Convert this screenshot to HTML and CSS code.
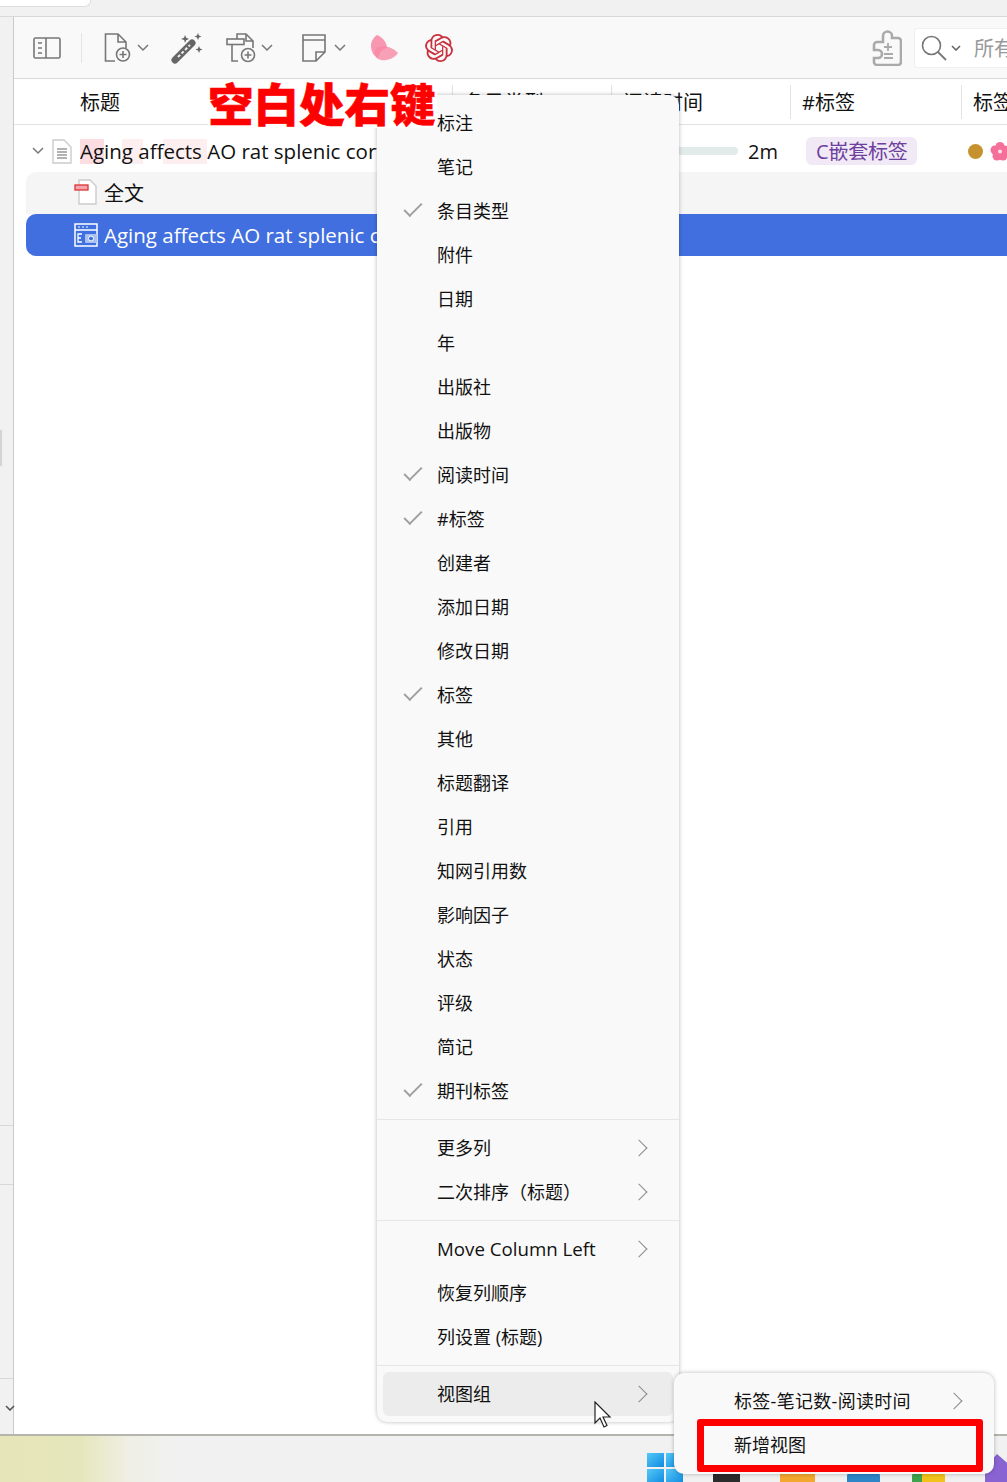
FILE: index.html
```html
<!DOCTYPE html>
<html>
<head>
	<title>Zotero column menu</title>
	<link rel="stylesheet" href="styles.css">
</head>
<body>
	<div class="topstrip"><div class="tab"></div></div>

	<div class="app">
		<div class="sidebar">
			<div class="handle"></div>
			<div class="side-line line-a"></div>
			<div class="side-line line-b"></div>
			<div class="side-line line-c"></div>
			<svg class="side-chev" width="10" height="6" viewBox="0 0 10 6"><path d="M1 1l4 4 4-4" fill="none" stroke="#555" stroke-width="1.6"/></svg>
		</div>

		<div class="main">
			<div class="toolbar">
				<svg class="tool tool-pane" width="28" height="22" viewBox="0 0 28 22"><rect x="1" y="1" width="26" height="20" rx="1.5" fill="none" stroke="#777" stroke-width="1.6"/><path d="M13 1v20M5 6h4M5 11h4M5 16h4" fill="none" stroke="#777" stroke-width="1.6"/></svg>
				<div class="tool-sep"></div>
				<svg class="tool tool-new" width="28" height="30" viewBox="0 0 28 30"><path d="M11 28H1.500V1H14l8 8v6M14 1v8h8" fill="none" stroke="#777" stroke-width="1.6"/><circle cx="19" cy="21.500" r="6.500" fill="#f9f9f9" stroke="#777" stroke-width="1.6"/><path d="M19 18v7M15.500 21.500h7" stroke="#777" stroke-width="1.6"/></svg>
				<svg class="chev" width="12" height="8" viewBox="0 0 12 8"><path d="M1 1l5 5 5-5" fill="none" stroke="#777" stroke-width="1.5"/></svg>
				<svg class="tool tool-wand" width="32" height="32" viewBox="0 0 32 32"><path d="M4 28L21 11" stroke="#666" stroke-width="7" stroke-linecap="round"/><path d="M7 25L19 13" stroke="#eee" stroke-width="2" stroke-dasharray="3 2"/><path d="M14 3l1.200 2.800L18 7l-2.800 1.200L14 11l-.8-3L10 7l3-1.200zM27 1l1 2.500L30.500 4.500 28 5.500 27 8l-1-2.500L23.500 4.500 26 3.500zM28 14l1 2.500 2.500 1-2.500 1-1 2.500-1-2.500-2.500-1 2.500-1z" fill="#666"/></svg>
				<svg class="tool tool-attach" width="30" height="30" viewBox="0 0 30 30"><path d="M12 28H6V11M11 6V1h9l7 7v7M20 1v7h7" fill="none" stroke="#777" stroke-width="1.6"/><rect x="1" y="6" width="17" height="5.500" fill="#f9f9f9" stroke="#777" stroke-width="1.6"/><circle cx="22" cy="22" r="6.500" fill="#f9f9f9" stroke="#777" stroke-width="1.6"/><path d="M22 18.500v7M18.500 22h7" stroke="#777" stroke-width="1.6"/></svg>
				<svg class="chev" width="12" height="8" viewBox="0 0 12 8"><path d="M1 1l5 5 5-5" fill="none" stroke="#777" stroke-width="1.5"/></svg>
				<svg class="tool tool-note" width="24" height="28" viewBox="0 0 24 28"><path d="M1 1h22v17l-9 9H1zM1 6h22M23 18h-9v9" fill="none" stroke="#777" stroke-width="1.6"/></svg>
				<svg class="chev chev-note" width="12" height="8" viewBox="0 0 12 8"><path d="M1 1l5 5 5-5" fill="none" stroke="#777" stroke-width="1.5"/></svg>
				<svg class="tool tool-petal" width="28" height="28" viewBox="0 0 28 28"><path d="M6 1C12 3 16 9 16 14 11 15 8 19 7 24 2 22 0 16 0 12 0 7 3 3 6 1z" fill="#f78aa5" opacity=".88"/><path d="M7 13C13 11 22 13 27 19 23 25 15 27 10 26 5 25 3 21 4 17 4 15 5 14 7 13z" fill="#f78aa5" opacity=".8"/></svg>
				<svg class="tool tool-gpt" width="28" height="28" viewBox="0 0 24 24"><path fill="#c9323f" d="M22.2819 9.8211a5.9847 5.9847 0 0 0-.5157-4.9108 6.0462 6.0462 0 0 0-6.5098-2.9A6.0651 6.0651 0 0 0 4.9807 4.1818a5.9847 5.9847 0 0 0-3.9977 2.9 6.0462 6.0462 0 0 0 .7427 7.0966 5.98 5.98 0 0 0 .511 4.9107 6.051 6.051 0 0 0 6.5146 2.9001A5.9847 5.9847 0 0 0 13.2599 24a6.0557 6.0557 0 0 0 5.7718-4.2058 5.9894 5.9894 0 0 0 3.9977-2.9001 6.0557 6.0557 0 0 0-.7475-7.0729zm-9.022 12.6081a4.4755 4.4755 0 0 1-2.8764-1.0408l.1419-.0804 4.7783-2.7582a.7948.7948 0 0 0 .3927-.6813v-6.7369l2.02 1.1686a.071.071 0 0 1 .038.052v5.5826a4.504 4.504 0 0 1-4.4945 4.4944zm-9.6607-4.1254a4.4708 4.4708 0 0 1-.5346-3.0137l.142.0852 4.783 2.7582a.7712.7712 0 0 0 .7806 0l5.8428-3.3685v2.3324a.0804.0804 0 0 1-.0332.0615L9.74 19.9502a4.4992 4.4992 0 0 1-6.1408-1.6464zM2.3408 7.8956a4.485 4.485 0 0 1 2.3655-1.9728V11.6a.7664.7664 0 0 0 .3879.6765l5.8144 3.3543-2.0201 1.1685a.0757.0757 0 0 1-.071 0l-4.8303-2.7865A4.504 4.504 0 0 1 2.3408 7.872zm16.5963 3.8558L13.1038 8.364 15.1192 7.2a.0757.0757 0 0 1 .071 0l4.8303 2.7913a4.4944 4.4944 0 0 1-.6765 8.1042v-5.6772a.79.79 0 0 0-.407-.667zm2.0107-3.0231l-.142-.0852-4.7735-2.7818a.7759.7759 0 0 0-.7854 0L9.409 9.2297V6.8974a.0662.0662 0 0 1 .0284-.0615l4.8303-2.7866a4.4992 4.4992 0 0 1 6.6802 4.66zM8.3065 12.863l-2.02-1.1638a.0804.0804 0 0 1-.038-.0567V6.0742a4.4992 4.4992 0 0 1 7.3757-3.4537l-.142.0805L8.704 5.459a.7948.7948 0 0 0-.3927.6813zm1.0976-2.3654l2.602-1.4998 2.6069 1.4998v2.9994l-2.5974 1.4997-2.6067-1.4997Z"/></svg>
				<div class="tool-fill"></div>
				<svg class="tool tool-puzzle" width="30" height="36" viewBox="0 0 30 36"><path d="M11 6a4.500 4.500 0 1 1 9 0h0v2h6a3 3 0 0 1 3 3v21a3 3 0 0 1-3 3H5a3 3 0 0 1-3-3v-4h4a4 4 0 0 0 0-8H2v-5a3 3 0 0 1 3-3h6z" fill="none" stroke="#aaa" stroke-width="2.600"/><path d="M16 13v8M12 17h8M12 24h9M12 28h9" stroke="#aaa" stroke-width="1.800"/></svg>
				<div class="search">
					<svg width="26" height="26" viewBox="0 0 26 26"><circle cx="10.500" cy="10.500" r="9" fill="none" stroke="#777" stroke-width="1.600"/><path d="M17 17l8 8" stroke="#777" stroke-width="1.800"/></svg>
					<svg class="search-chev" width="10" height="6" viewBox="0 0 10 6"><path d="M1 1l4 4 4-4" fill="none" stroke="#666" stroke-width="1.600"/></svg>
					<span class="search-text">所有字段</span>
				</div>
			</div>

			<div class="list-head">
				<div class="col col-title head-cell">标题</div>
				<div class="col col-type head-cell">条目类型</div>
				<div class="col col-time head-cell">阅读时间</div>
				<div class="col col-hash head-cell">#标签</div>
				<div class="col col-tags head-cell">标签</div>
			</div>

			<div class="row row-parent">
				<div class="col col-title">
					<svg class="twisty" width="12" height="8" viewBox="0 0 12 8"><path d="M1 1l5 5 5-5" fill="none" stroke="#777" stroke-width="1.500"/></svg>
					<svg class="row-icon" width="20" height="25" viewBox="0 0 20 25"><path d="M1 1h11l7 7v16H1z" fill="#fff" stroke="#ccc" stroke-width="1.400"/><path d="M5 10h10M5 13h10M5 16h10M5 19h10" stroke="#666" stroke-width="1.200"/></svg>
					<span class="title-text">Aging affects AO rat splenic cortical cells</span>
				</div>
				<div class="col col-type"></div>
				<div class="col col-time"><span class="bar"></span><span class="time-text">2m</span></div>
				<div class="col col-hash"><span class="tag">C嵌套标签</span></div>
				<div class="col col-tags">
					<span class="dot"></span>
					<svg width="20" height="20" viewBox="0 0 20 20"><g fill="#f4709a"><circle cx="10" cy="5.500" r="4.500"/><circle cx="15" cy="9" r="4.500"/><circle cx="13" cy="15" r="4.500"/><circle cx="7" cy="15" r="4.500"/><circle cx="5" cy="9" r="4.500"/></g><circle cx="10" cy="10.500" r="2" fill="#fde"/></svg>
				</div>
			</div>

			<div class="row-child row-pdf">
				<svg class="row-icon" width="24" height="26" viewBox="0 0 24 26"><path d="M5 1h11l6 6v18H5z" fill="#fff" stroke="#ccc" stroke-width="1.400"/><rect x="1" y="6" width="13" height="5" fill="#f4a6ac" stroke="#d33" stroke-width="1.300"/></svg>
				<span class="child-text">全文</span>
			</div>

			<div class="row-child row-selected">
				<svg class="row-icon" width="24" height="26" viewBox="0 0 24 26"><rect x="1" y="2" width="22" height="22" fill="#3f6fe0" stroke="#fff" stroke-width="1.500"/><path d="M1 8h22" stroke="#fff" stroke-width="1.500"/><path d="M4 5h2M8 5h2M12 5h2" stroke="#fff"/><path d="M8 12H4v8h4M4 16h3" fill="none" stroke="#fff" stroke-width="1.300"/><rect x="11" y="12" width="12" height="9" rx="1" fill="#a9c0f0"/><circle cx="17" cy="16.500" r="2.500" fill="#3f6fe0" stroke="#fff"/></svg>
				<span class="child-text child-clip">Aging affects AO rat splenic cortical cells</span>
			</div>

			<div class="list-empty"></div>
		</div>
	</div>

	<div class="taskbar">
		<svg class="win-logo" width="36" height="30" viewBox="0 0 36 30"><defs><linearGradient id="win" x1="0" y1="0" x2="1" y2="1"><stop offset="0" stop-color="#55c8f8"/><stop offset="1" stop-color="#0e8be0"/></linearGradient></defs><g fill="url(#win)"><rect x="0" y="0" width="17" height="14"/><rect x="19" y="0" width="17" height="14"/><rect x="0" y="16" width="17" height="14"/><rect x="19" y="16" width="17" height="14"/></g></svg>
		<div class="task-icon task-black"></div>
		<div class="task-icon task-orange"><span class="task-blue-bar"></span></div>
		<div class="task-icon task-blue"></div>
		<div class="task-icon task-chrome"></div>
		<div class="task-icon task-purple"></div>
	</div>

	<div class="menu column-menu">
		<div class="menu-item">标注</div>
		<div class="menu-item">笔记</div>
		<div class="menu-item checked">条目类型</div>
		<div class="menu-item">附件</div>
		<div class="menu-item">日期</div>
		<div class="menu-item">年</div>
		<div class="menu-item">出版社</div>
		<div class="menu-item">出版物</div>
		<div class="menu-item checked">阅读时间</div>
		<div class="menu-item checked">#标签</div>
		<div class="menu-item">创建者</div>
		<div class="menu-item">添加日期</div>
		<div class="menu-item">修改日期</div>
		<div class="menu-item checked">标签</div>
		<div class="menu-item">其他</div>
		<div class="menu-item">标题翻译</div>
		<div class="menu-item">引用</div>
		<div class="menu-item">知网引用数</div>
		<div class="menu-item">影响因子</div>
		<div class="menu-item">状态</div>
		<div class="menu-item">评级</div>
		<div class="menu-item">简记</div>
		<div class="menu-item checked">期刊标签</div>
		<div class="menu-sep"></div>
		<div class="menu-item has-sub">更多列</div>
		<div class="menu-item has-sub">二次排序（标题）</div>
		<div class="menu-sep"></div>
		<div class="menu-item has-sub latin">Move Column Left</div>
		<div class="menu-item">恢复列顺序</div>
		<div class="menu-item">列设置 (标题)</div>
		<div class="menu-sep"></div>
		<div class="menu-item has-sub active">视图组</div>
	</div>

	<div class="menu sub-menu">
		<div class="menu-item has-sub view-name">标签-笔记数-阅读时间</div>
		<div class="menu-item">新增视图</div>
	</div>
	<div class="red-box"></div>

	<svg class="cursor" width="20" height="28" viewBox="0 0 20 28"><path d="M2 1v21l5-5 4 9 3-1.500-4-8.500h7z" fill="#fff" stroke="#222" stroke-width="1.200"/></svg>

	<!-- pasted note, it sits on a white patch over the header -->
	<div class="annotation">空白处右键</div>
</body>
</html>
```

FILE: styles.css
```css
/* page frame */
html, body {
	margin: 0;
	padding: 0;
}
body {
	position: relative;
	width: 1007px;
	height: 1482px;
	overflow: hidden;
	display: flex;
	flex-direction: column;
	background-color: #fff;
	color: #111;
	font-family: "Open Sans", "Noto Sans CJK SC", sans-serif;
	font-size: 20px;
}

.topstrip {
	height: 16px;
	flex: none;
	background-color: #f1f1f1;
	border-bottom: 1px solid #d9d9d9;
}
.tab {
	width: 90px;
	height: 6px;
	background-color: #fff;
	border: 1px solid #ddd;
	border-top: none;
	border-left: none;
	border-bottom-right-radius: 6px;
}

.app {
	flex: 1;
	display: flex;
	min-height: 0;
}

/* left strip */
.sidebar {
	position: relative;
	width: 13px;
	flex: none;
	background-color: #f1f1f1;
	border-right: 1px solid #c9c9c9;
}
.handle {
	position: absolute;
	left: 0;
	top: 413px;
	width: 2px;
	height: 36px;
	background-color: #d4d4d4;
}
.side-line {
	position: absolute;
	left: 0;
	right: 0;
	height: 1px;
	background-color: #d8d8d8;
}
.line-a { top: 1108px; }
.line-b { top: 1167px; }
.line-c { top: 1361px; }
.side-chev {
	position: absolute;
	left: 5px;
	top: 1388px;
}

.main {
	flex: 1;
	min-width: 0;
	display: flex;
	flex-direction: column;
}

/* toolbar */
.toolbar {
	height: 61px;
	flex: none;
	display: flex;
	align-items: center;
	background-color: #f9f9f9;
	border-bottom: 1px solid #d9d9d9;
}
.tool { flex: none; }
.tool-pane { margin-left: 19px; }
.tool-sep {
	width: 1px;
	height: 30px;
	margin-left: 20px;
	background-color: #e4e4e4;
}
.tool-new { margin-left: 22px; }
.chev { flex: none; margin-left: 5px; }
.chev-note { margin-left: 8px; }
.tool-wand { margin-left: 22px; }
.tool-attach { margin-left: 23px; }
.tool-note { margin-left: 29px; }
.tool-petal { margin-left: 25px; }
.tool-gpt { margin-left: 26px; }
.tool-fill { flex: 1; }
.tool-puzzle { margin-right: 12px; }
.search {
	width: 93px;
	height: 40px;
	flex: none;
	display: flex;
	align-items: center;
	gap: 4px;
	padding-left: 6px;
	box-sizing: border-box;
	overflow: hidden;
	white-space: nowrap;
	background-color: #fff;
	border: 1px solid #f0f0f0;
	border-right: none;
	border-radius: 4px 0 0 4px;
}
.search svg { flex: none; }
.search-text {
	margin-left: 9px;
	color: #999;
}

/* list */
.list-head {
	height: 45px;
	flex: none;
	display: flex;
	align-items: center;
	background-color: #fff;
	border-bottom: 1px solid #e2e2e2;
}
.col {
	flex: none;
	box-sizing: border-box;
	white-space: nowrap;
	overflow: hidden;
}
.col-title { width: 438px; }
.col-type { width: 159px; }
.col-time { width: 179px; }
.col-hash { width: 171px; }
.col-tags { flex: 1; }
.head-cell {
	height: 34px;
	line-height: 36px;
	padding-left: 11px;
	border-left: 1px solid #e2e2e2;
}
.head-cell.col-title {
	padding-left: 66px;
	border-left: none;
}

.row {
	height: 47px;
	flex: none;
	box-sizing: border-box;
	padding-top: 5px;
	display: flex;
	align-items: center;
}
.row-parent .col {
	display: flex;
	align-items: center;
}
.row-parent .col-title { padding-left: 18px; }
.twisty { flex: none; }
.row-parent .row-icon { flex: none; margin-left: 8px; }
.title-text {
	margin-left: 8px;
	line-height: 25px;
	font-size: 20.5px;
	background-image:
		linear-gradient(#fbdde2, #fbdde2),
		linear-gradient(#fdeef0, #fdeef0),
		linear-gradient(#fdeef0, #fdeef0);
	background-repeat: no-repeat;
	background-size: 24px 25px, 21px 25px, 44px 25px;
	background-position: 0 0, 42px 0, 83px 0;
}
.col-time { padding: 0 12px 0 11px; gap: 10px; }
.bar {
	flex: 1;
	height: 8px;
	border-radius: 4px;
	background-color: #e1ebe9;
}
.row-parent .col-hash { padding-left: 16px; }
.tag {
	height: 28px;
	line-height: 30px;
	padding: 0 9px 0 10px;
	border-radius: 6px;
	background-color: #f1e9f5;
	color: #6d3f9e;
	letter-spacing: -0.2px;
}
.row-parent .col-tags { gap: 7px; padding-left: 7px; overflow: visible; }
.dot {
	width: 15px;
	height: 15px;
	flex: none;
	border-radius: 50%;
	background-color: #c6922f;
}

.row-child {
	height: 42px;
	flex: none;
	box-sizing: border-box;
	margin-left: 12px;
	display: flex;
	align-items: center;
	padding-left: 48px;
	white-space: nowrap;
	overflow: hidden;
}
.child-text { margin-left: 6px; font-size: 20.5px; }
.child-clip {
	width: 273px;
	overflow: hidden;
}
.row-pdf {
	padding-bottom: 2px;
	background-color: #f5f5f5;
	border-top-left-radius: 10px;
}
.row-pdf .child-text { font-size: 20px; }
.row-selected {
	background-color: #416fdf;
	color: #fff;
	border-radius: 10px 0 0 10px;
}
.list-empty { flex: 1; }

/* taskbar */
.taskbar {
	position: relative;
	height: 48px;
	flex: none;
	box-sizing: border-box;
	border-top: 2px solid #b5b5ae;
	background: linear-gradient(90deg, #e5e5b8 0, #e6e6bc 80px, #efefe6 130px, #f1f1f1 180px);
}
.win-logo {
	position: absolute;
	left: 647px;
	top: 17px;
}
.task-icon {
	position: absolute;
	top: 32px;
	height: 16px;
}
.task-black { left: 713px; width: 27px; background-color: #2b2b2b; }
.task-orange { left: 780px; width: 35px; background-color: #f3a72e; border-radius: 4px 4px 0 0; }
.task-blue-bar {
	display: block;
	width: 24px;
	height: 3px;
	margin: 2px auto 0;
	background-color: #1c6fc4;
}
.task-blue { left: 847px; width: 33px; background-color: #2e86c8; border-radius: 50% 50% 0 0; }
.task-chrome {
	left: 912px;
	width: 33px;
	background: linear-gradient(90deg, #3fa34d 0, #3fa34d 30%, #f2c21b 30%, #f2c21b 100%);
	border-radius: 50% 50% 0 0;
}
.task-purple {
	left: 985px;
	width: 24px;
	top: 18px;
	height: 30px;
	background-color: #8a63d2;
	clip-path: polygon(50% 0, 100% 35%, 100% 100%, 0 100%, 0 45%);
}

/* context menus */
.menu {
	position: absolute;
	box-sizing: border-box;
	padding: 6px;
	background-color: #f9f9f9;
	border-radius: 10px;
	box-shadow: 0 0 4px rgba(0, 0, 0, 0.28);
	font-size: 18px;
}
.column-menu {
	left: 377px;
	top: 95px;
	width: 302px;
	height: 1327px;
}
.sub-menu {
	left: 674px;
	top: 1373px;
	width: 320px;
	height: 101px;
}
.menu-item {
	position: relative;
	height: 44px;
	line-height: 44px;
	padding-left: 54px;
	border-radius: 6px;
	white-space: nowrap;
}
.menu-item.latin { font-size: 18.7px; }
.menu-item.view-name { letter-spacing: 0.3px; }
.menu-item.active { background-color: #ececec; }
.menu-item.checked::before {
	content: "";
	position: absolute;
	left: 21px;
	top: 14px;
	width: 16px;
	height: 7px;
	border-left: 2px solid #a0a0a0;
	border-bottom: 2px solid #a0a0a0;
	transform: rotate(-45deg);
}
.menu-item.has-sub::after {
	content: "";
	position: absolute;
	right: 28px;
	top: 16px;
	width: 11px;
	height: 11px;
	border-top: 1.500px solid #8c8c8c;
	border-right: 1.500px solid #8c8c8c;
	transform: rotate(45deg);
}
.menu-sep {
	height: 1px;
	margin: 6px -6px;
	background-color: #e6e6e6;
}
.red-box {
	position: absolute;
	left: 697px;
	top: 1419px;
	width: 286px;
	height: 53px;
	box-sizing: border-box;
	border: 7px solid #ff0000;
	border-radius: 3px;
}
.cursor {
	position: absolute;
	left: 593px;
	top: 1401px;
}

/* annotation over the header */
.annotation {
	position: absolute;
	left: 208px;
	top: 80px;
	width: 229px;
	height: 48px;
	background-color: #fff;
	color: #ff0000;
	font-size: 45.5px;
	line-height: 45px;
	font-weight: 900;
	font-family: "Noto Sans CJK SC", sans-serif;
	-webkit-text-stroke: 0.6px #ff0000;
	white-space: nowrap;
}
```
